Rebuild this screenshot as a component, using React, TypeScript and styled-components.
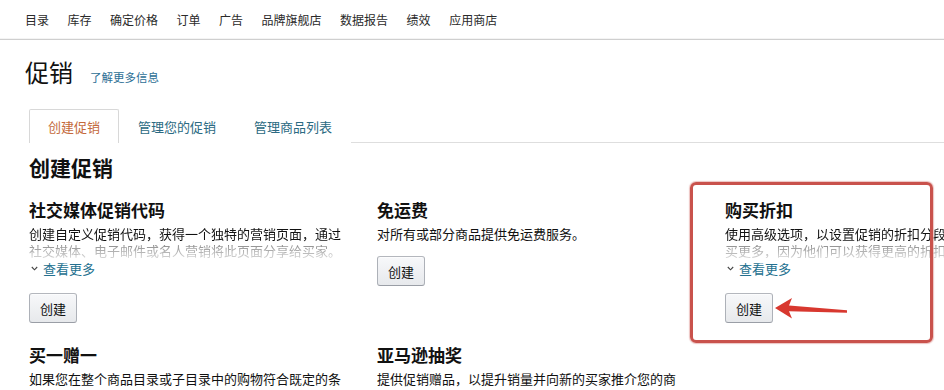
import React from "react";
import styled, { createGlobalStyle } from "styled-components";

const Global = createGlobalStyle`
  html, body { margin: 0; padding: 0; overflow: hidden; background: #fff; }
  body {
    font-family: "Noto Sans CJK SC", "Noto Sans", sans-serif;
    color: #111;
    -webkit-font-smoothing: antialiased;
  }
  * { box-sizing: border-box; }
`;

const Page = styled.div`
  width: 944px;
  height: 390px;
  overflow: hidden;
`;

const TopNav = styled.nav`
  display: flex;
  align-items: center;
  height: 40px;
  padding: 0 0 0 25px;
  gap: 18.5px;
  border-bottom: 1px solid #cfcfcf;
  box-shadow: inset 0 -4px 0 -3px #f4f4f4;
`;

const NavItem = styled.span`
  font-size: 12px;
  line-height: 39px;
  color: #2a2a2a;
  white-space: nowrap;
`;

const TitleRow = styled.header`
  display: flex;
  align-items: baseline;
  gap: 17px;
  margin-top: 16px;
  padding-left: 25px;
  height: 32px;
`;

const PageTitle = styled.h1`
  margin: 0;
  font-size: 24px;
  line-height: 32px;
  font-weight: 400;
  color: #111;
`;

const InfoLink = styled.a`
  font-size: 11.5px;
  color: #2d6f95;
  text-decoration: none;
`;

const Main = styled.main`
  padding: 0 0 0 29px;
`;

const TabStrip = styled.div`
  display: flex;
  margin-top: 21px;
  border-bottom: 1px solid #dedede;
  height: 34px;
`;

const Tab = styled.div<{ $active?: boolean }>`
  height: 34px;
  padding: 0 18px;
  font-size: 13px;
  line-height: 33px;
  white-space: nowrap;
  color: ${(p) => (p.$active ? "#c46a3c" : "#2b6a82")};
  background: #fff;
  border: 1px solid ${(p) => (p.$active ? "#d8d8d8" : "transparent")};
  border-bottom: none;
  margin-bottom: -1px;
  border-radius: 2px 2px 0 0;
`;

const SectionTitle = styled.h2`
  margin: 10px 0 0;
  font-size: 21px;
  line-height: 28px;
  font-weight: 700;
  color: #111;
`;

const Grid = styled.div`
  display: grid;
  grid-template-columns: repeat(3, 320px);
  column-gap: 28px;
  row-gap: 20px;
  margin-top: 17px;
  align-items: start;
`;

const Card = styled.section`
  position: relative;
  display: flex;
  flex-direction: column;
  align-items: flex-start;
`;

const CardTitle = styled.h3`
  margin: 0;
  font-size: 17px;
  line-height: 24px;
  font-weight: 700;
  color: #111;
  white-space: nowrap;
`;

const Desc = styled.p<{ $collapsed?: boolean }>`
  margin: 3px 0 0;
  width: 100%;
  font-size: 13px;
  line-height: 17px;
  color: #111;
  ${(p) =>
    p.$collapsed
      ? `
    height: 33px;
    overflow: hidden;
    -webkit-mask-image: linear-gradient(to bottom, #000 0, #000 17px, rgba(0,0,0,0.45) 21px, rgba(0,0,0,0.18) 33px);
    mask-image: linear-gradient(to bottom, #000 0, #000 17px, rgba(0,0,0,0.45) 21px, rgba(0,0,0,0.18) 33px);
  `
      : ""}
`;

const SeeMore = styled.a`
  display: flex;
  align-items: center;
  gap: 5px;
  padding-left: 2px;
  height: 21px;
  font-size: 13px;
  color: #23708f;
  text-decoration: none;
`;

const Button = styled.button`
  margin-top: 14px;
  width: 48px;
  height: 30px;
  padding: 0;
  font-family: inherit;
  font-size: 13px;
  color: #111;
  background: linear-gradient(to bottom, #f7f8fa, #e7e9ec);
  border: 1px solid #adb1b8;
  border-color: #b4b7bd #adb1b8 #9a9ea6;
  border-radius: 3px;
  box-shadow: inset 0 1px 0 rgba(255, 255, 255, 0.6);
`;

const Highlight = styled.div`
  position: absolute;
  top: -16px;
  left: -35px;
  width: 243px;
  bottom: -20px;
  border: 3px solid #c9524c;
  border-radius: 6px;
  box-shadow: 0 0 1px 1px rgba(201, 82, 76, 0.35);
  pointer-events: none;
`;

const Arrow = styled.svg`
  position: absolute;
  left: 50px;
  top: 98px;
  pointer-events: none;
`;

const Chevron = () => (
  <svg width="7" height="5" viewBox="0 0 7 5">
    <path d="M0.8 1 L3.5 3.8 L6.2 1" fill="none" stroke="#444" strokeWidth="1.1" />
  </svg>
);

type CardProps = {
  title: string;
  desc: string;
  collapsed?: boolean;
  highlight?: boolean;
  button?: boolean;
};

const PromoCard = ({ title, desc, collapsed, highlight, button = true }: CardProps) => (
  <Card>
    <CardTitle>{title}</CardTitle>
    <Desc $collapsed={collapsed}>{desc}</Desc>
    {collapsed && (
      <SeeMore href="#">
        <Chevron />
        查看更多
      </SeeMore>
    )}
    {button && <Button>创建</Button>}
    {highlight && (
      <>
        <Highlight />
        <Arrow width="74" height="24" viewBox="0 0 74 24">
          <polygon
            points="0,12 17,2 14,9.5 72,14.3 72,16.8 14,15.2 17,22.5"
            fill="#d8382f"
          />
        </Arrow>
      </>
    )}
  </Card>
);

const navItems = ["目录", "库存", "确定价格", "订单", "广告", "品牌旗舰店", "数据报告", "绩效", "应用商店"];

export default function App() {
  return (
    <Page>
      <Global />
      <TopNav>
        {navItems.map((n) => (
          <NavItem key={n}>{n}</NavItem>
        ))}
      </TopNav>
      <TitleRow>
        <PageTitle>促销</PageTitle>
        <InfoLink href="#">了解更多信息</InfoLink>
      </TitleRow>
      <Main>
        <TabStrip>
          <Tab $active>创建促销</Tab>
          <Tab>管理您的促销</Tab>
          <Tab>管理商品列表</Tab>
        </TabStrip>
        <SectionTitle>创建促销</SectionTitle>
        <Grid>
          <PromoCard
            title="社交媒体促销代码"
            desc="创建自定义促销代码，获得一个独特的营销页面，通过社交媒体、电子邮件或名人营销将此页面分享给买家。"
            collapsed
          />
          <PromoCard title="免运费" desc="对所有或部分商品提供免运费服务。" />
          <PromoCard
            title="购买折扣"
            desc="使用高级选项，以设置促销的折扣分段，并激励买家购买更多，因为他们可以获得更高的折扣。"
            collapsed
            highlight
          />
          <PromoCard
            title="买一赠一"
            desc="如果您在整个商品目录或子目录中的购物符合既定的条件，即可为买家提供赠品。"
          />
          <PromoCard
            title="亚马逊抽奖"
            desc="提供促销赠品，以提升销量并向新的买家推介您的商品。"
          />
        </Grid>
      </Main>
    </Page>
  );
}
